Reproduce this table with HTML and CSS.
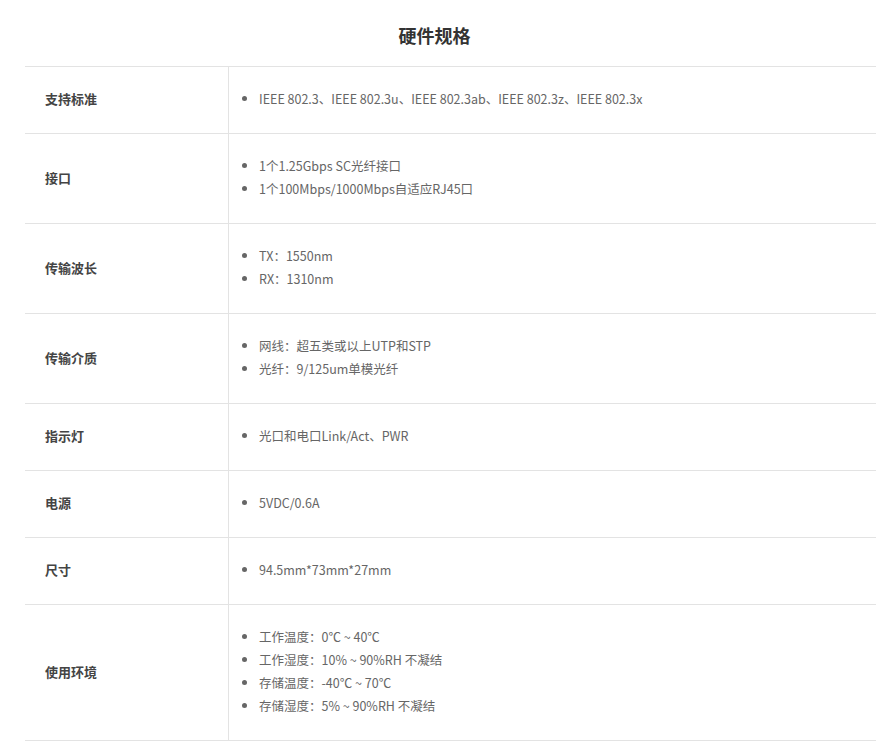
FILE: index.html
```html
<!DOCTYPE html>
<html lang="zh-CN">
<head>
<meta charset="utf-8">
<title>硬件规格</title>
<link rel="stylesheet" href="styles.css">
</head>
<body>
<div class="spec">
  <h2 class="spec-title">硬件规格</h2>
  <table class="spec-table">
    <tr>
      <th>支持标准</th>
      <td><ul><li>IEEE 802.3、IEEE 802.3u、IEEE 802.3ab、IEEE 802.3z、IEEE 802.3x</li></ul></td>
    </tr>
    <tr>
      <th>接口</th>
      <td><ul><li>1个1.25Gbps SC光纤接口</li><li>1个100Mbps/1000Mbps自适应RJ45口</li></ul></td>
    </tr>
    <tr>
      <th>传输波长</th>
      <td><ul><li>TX：1550nm</li><li>RX：1310nm</li></ul></td>
    </tr>
    <tr>
      <th>传输介质</th>
      <td><ul><li>网线：超五类或以上UTP和STP</li><li>光纤：9/125um单模光纤</li></ul></td>
    </tr>
    <tr>
      <th>指示灯</th>
      <td><ul><li>光口和电口Link/Act、PWR</li></ul></td>
    </tr>
    <tr>
      <th>电源</th>
      <td><ul><li>5VDC/0.6A</li></ul></td>
    </tr>
    <tr>
      <th>尺寸</th>
      <td><ul><li>94.5mm*73mm*27mm</li></ul></td>
    </tr>
    <tr>
      <th>使用环境</th>
      <td><ul><li>工作温度：0℃ ~ 40℃</li><li>工作湿度：10% ~ 90%RH 不凝结</li><li>存储温度：-40℃ ~ 70℃</li><li>存储湿度：5% ~ 90%RH 不凝结</li></ul></td>
    </tr>
  </table>
</div>
</body>
</html>
```

FILE: styles.css
```css
html, body {
  margin: 0;
  padding: 0;
  background: #fff;
}
body {
  font-family: "Microsoft YaHei", "Noto Sans CJK SC", sans-serif;
  color: #333;
}
.spec {
  padding-left: 25px;
}
.spec-title {
  margin: 0;
  padding: 22px 32px 0 0;
  height: 44px;
  text-align: center;
  font-size: 18px;
  line-height: 26px;
  font-weight: bold;
  color: #333;
}
.spec-table {
  width: 851px;
  border-collapse: collapse;
  border-top: 1px solid #e3e3e3;
}
.spec-table tr {
  border-bottom: 1px solid #e3e3e3;
}
.spec-table th {
  width: 183px;
  padding: 0 0 3px 20px;
  text-align: left;
  vertical-align: middle;
  font-size: 13px;
  font-weight: bold;
  color: #444;
  border-right: 1px solid #e3e3e3;
}
.spec-table td {
  padding: 20px 0 23px 0;
  font-size: 12.5px;
  line-height: 23px;
  color: #666;
}
.spec-table ul {
  margin: 0;
  padding-left: 30px;
}
```
